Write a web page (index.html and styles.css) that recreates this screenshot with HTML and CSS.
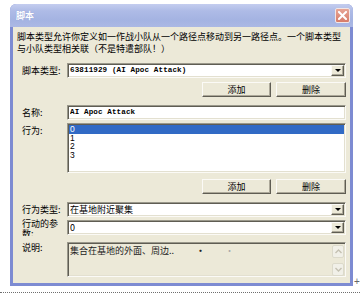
FILE: index.html
```html
<!DOCTYPE html>
<html>
<head>
<meta charset="utf-8">
<link rel="stylesheet" href="styles.css">
</head>
<body>
<div class="page">
  <div class="window">
    <div class="titlebar">
      <span class="title">脚本</span>
      <span class="close"><svg width="9" height="9" viewBox="0 0 9 9"><path d="M1 1 L8 8 M8 1 L1 8" stroke="#fff" stroke-width="2" stroke-linecap="square"/></svg></span>
    </div>
    <div class="client">
      <p class="desc">脚本类型允许你定义如一作战小队从一个路径点移动到另一路径点。一个脚本类型<br>与小队类型相关联（不是特遣部队！）</p>

      <div class="row r1">
        <span class="lbl">脚本类型:</span>
        <div class="field combo"><span class="val mono">63811929 (AI Apoc Attack)</span><span class="drop"><i class="tri"></i></span></div>
      </div>
      <div class="btns b1"><button class="btn">添加</button><button class="btn">删除</button></div>

      <div class="row r2">
        <span class="lbl">名称:</span>
        <div class="field"><span class="val mono">AI Apoc Attack</span></div>
      </div>

      <div class="row r3 top">
        <span class="lbl lbl-top">行为:</span>
        <div class="field list">
          <div class="item sel">0</div>
          <div class="item">1</div>
          <div class="item">2</div>
          <div class="item">3</div>
        </div>
      </div>
      <div class="btns b2"><button class="btn">添加</button><button class="btn">删除</button></div>

      <div class="row r4">
        <span class="lbl">行为类型:</span>
        <div class="field combo"><span class="val">在基地附近聚集</span><span class="drop"><i class="tri"></i></span></div>
      </div>

      <div class="row r5 top">
        <span class="lbl lbl-wrap">行动的参数:</span>
        <div class="field combo"><span class="val">0</span><span class="drop"><i class="tri"></i></span></div>
      </div>

      <div class="row r6 top">
        <span class="lbl lbl-top2">说明:</span>
        <div class="field memo">
          <span class="memo-text">集合在基地的外面、周边..<span class="m1">·</span><span class="m2">·</span></span>
          <span class="sbar">
            <span class="sbtn"><svg width="7" height="5" viewBox="0 0 7 5"><path d="M0.5 4 L3.5 1 L6.5 4" fill="none" stroke="#c4c1b2" stroke-width="1.4"/></svg></span>
            <span class="sbtn"><svg width="7" height="5" viewBox="0 0 7 5"><path d="M0.5 1 L3.5 4 L6.5 1" fill="none" stroke="#c4c1b2" stroke-width="1.4"/></svg></span>
          </span>
        </div>
      </div>
    </div>
  </div>
  <div class="dots"></div>
  <span class="plus">+</span>
</div>
</body>
</html>
```

FILE: styles.css
```css
* { box-sizing: border-box; }
html, body { margin: 0; padding: 0; background: #fff; }
body {
  width: 360px;
  height: 295px;
  overflow: hidden;
  font-family: "Noto Sans CJK SC", "Liberation Sans", sans-serif;
  font-size: 9px;
  color: #000;
}
.page { position: relative; height: 295px; padding-top: 4px; }

.window {
  margin-left: 10px;
  width: 343px;
  height: 282px;
  background: #7d8bd2;
  border-radius: 6px 6px 0 0;
  display: flex;
  flex-direction: column;
}
.titlebar {
  height: 23px;
  flex: none;
  display: flex;
  align-items: center;
  justify-content: space-between;
  padding: 0 3px 0 6px;
  border-radius: 6px 6px 0 0;
  background: linear-gradient(#c4cdef, #aebbe6 30%, #a4b3e2 70%, #abb8e4);
}
.title {
  color: #fff;
  font-weight: bold;
  font-size: 9px;
  line-height: 10px;
  text-shadow: 0 0 1px #8a9ad0;
}
.close {
  width: 15px;
  height: 15px;
  border: 1px solid #f2e6e6;
  border-radius: 2px;
  background: linear-gradient(#e7a595, #d77c69);
  display: flex;
  align-items: center;
  justify-content: center;
}

.client {
  flex: 1;
  margin: 0 3px 3px 3px;
  background: #ece9d8;
  padding: 0 4px;
  display: flex;
  flex-direction: column;
}
.desc {
  margin: 4px 0 0 0;
  line-height: 12px;
  font-size: 9px;
  white-space: nowrap;
}

.row { display: flex; align-items: center; }
.row.top { align-items: flex-start; }
.lbl {
  width: 45px;
  margin-left: 5px;
  flex: none;
  line-height: 10px;
  white-space: nowrap;
}
.lbl-top { padding-top: 3px; }
.lbl-top2 { padding-top: 1px; }
.lbl-wrap {
  white-space: normal;
  width: 45px;
  height: 17px;
  overflow: hidden;
  padding-right: 8px;
  margin-top: -1px;
}

.field {
  width: 279px;
  height: 15px;
  flex: none;
  background: #fff;
  border: 1px solid;
  border-color: #9a988b #fbfaf6 #fbfaf6 #9a988b;
  box-shadow: inset 1px 1px 0 #5f5d53, inset -1px -1px 0 #e3e0d0;
  display: flex;
  align-items: center;
  position: relative;
  padding: 0 2px;
}
.val { flex: 1; line-height: 11px; white-space: nowrap; overflow: hidden; }
.mono { font-family: "Liberation Mono", monospace; font-size: 7.6px; font-weight: bold; letter-spacing: 0.1px; }
.drop {
  width: 13px;
  height: 11px;
  flex: none;
  margin-right: -1px;
  background: #ece9d8;
  border: 1px solid;
  border-color: #fbfaf6 #5f5d53 #5f5d53 #fbfaf6;
  box-shadow: inset -1px -1px 0 #aca899;
  display: flex;
  align-items: center;
  justify-content: center;
}
.tri {
  width: 0; height: 0;
  border-left: 3px solid transparent;
  border-right: 3px solid transparent;
  border-top: 3px solid #000;
}

.r1 { margin-top: 8px; }
.r2 { margin-top: 8px; }
.r3 { margin-top: 3px; }
.r4 { margin-top: 8px; }
.r5 { margin-top: 3px; }
.r6 { margin-top: 6px; }

.btns {
  display: flex;
  justify-content: flex-end;
  gap: 5px;
}
.b1 { margin-top: 4px; }
.b2 { margin-top: 6px; }
.btn {
  width: 69px;
  height: 15px;
  padding: 0;
  margin: 0;
  font-family: "Noto Sans CJK SC", sans-serif;
  font-size: 9px;
  line-height: 11px;
  color: #000;
  background: #ece9d8;
  border: 1px solid;
  border-color: #fbfaf6 #5f5d53 #5f5d53 #fbfaf6;
  box-shadow: inset -1px -1px 0 #aca899;
}
.btn + .btn { width: 70px; }

.list {
  height: 50px;
  display: block;
  padding: 1px 1px;
}
.item {
  height: 8.4px;
  line-height: 8.4px;
  font-family: "Liberation Sans", sans-serif;
  font-size: 8.5px;
  padding-left: 1px;
}
.item.sel { background: #316ac5; color: #fff; height: 9px; line-height: 9px; }

.memo {
  height: 35px;
  background: #ece9d8;
  align-items: flex-start;
  padding: 2px 0 2px 2px;
}
.memo-text {
  flex: 1;
  line-height: 11px;
  color: #222;
  white-space: nowrap;
  overflow: hidden;
}
.m1 { margin-left: 22px; font-weight: bold; }
.m2 { margin-left: 20px; color: #aaa; }
.sbar {
  width: 12px;
  height: 31px;
  flex: none;
  display: flex;
  flex-direction: column;
  justify-content: space-between;
  margin-right: 1px;
}
.sbtn {
  height: 13px;
  background: #f1f0e8;
  border: 1px solid #dcdacb;
  border-radius: 2px;
  display: flex;
  align-items: center;
  justify-content: center;
}

.dots {
  margin-top: 6px;
  border-top: 1px dotted #6f6f6f;
}
.plus {
  position: absolute;
  left: 354px;
  top: 277px;
  font-family: "Liberation Sans", sans-serif;
  font-size: 10px;
  line-height: 10px;
  color: #666;
}
```
